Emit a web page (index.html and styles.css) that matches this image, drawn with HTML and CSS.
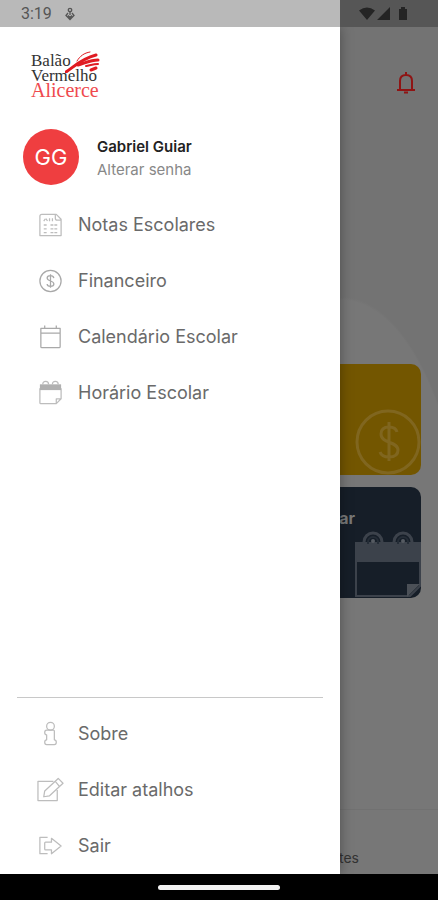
FILE: index.html
```html
<!DOCTYPE html>
<html lang="pt-BR">
<head>
<meta charset="utf-8">
<meta name="viewport" content="width=device-width, initial-scale=1">
<title>Balão Vermelho Alicerce</title>
<link rel="stylesheet" href="styles.css">
</head>
<body>
<header class="status">
  <div class="status-left">
    <span>3:19</span>
    <svg width="10" height="14" viewBox="0 0 10 14" fill="none" stroke="#555" stroke-width="1.3"><circle cx="5" cy="3" r="1.7"/><path d="M5 5v3M3 6 1 8.500 5 12.500 9 8.500 7 6M3 8.500 5 10.500 7 8.500"/></svg>
  </div>
  <svg class="status-icons" width="50" height="14" viewBox="0 0 50 14" fill="#242424"><path d="M0 3.500Q8-2.500 16 3.500L8 13zM31 0v13H18zM40 2h2V0h4v2h2v11h-8z"/></svg>
</header>

<div class="stage">
  <main class="app">
    <div class="app-top">
      <button class="bell" aria-label="Notificações">
        <svg width="20" height="24" viewBox="0 0 20 24" fill="none" stroke="#8f1414" stroke-width="2"><path d="M1 19h18M4 18v-8c0-4 2.500-6 6-6s6 2 6 6v8M10 4V1"/><path d="M8 21.500h4"/></svg>
      </button>
    </div>
    <div class="cards">
      <a class="card finance" href="#financeiro" aria-label="Financeiro">
        <svg width="66" height="66" viewBox="0 0 66 66" fill="none" stroke="#80661f" stroke-width="3"><circle cx="33" cy="33" r="31"/><path d="M34 13v39M42 23c-1-4-4-5-8-5-5 0-8 2-8 7 0 10 17 7 17 16 0 5-4 7-9 7-5 0-8-2-9-5"/></svg>
      </a>
      <a class="card schedule" href="#horario">
        <span class="card-title">ar</span>
        <svg width="67" height="67" viewBox="0 0 67 67" fill="none"><path d="M2 17v48h54l10-10V17" stroke="#3c424b" stroke-width="2"/><path d="M1 11h66v20H1z" fill="#3c424b"/><path d="M53 66V53h13z" fill="#4b5057"/><g stroke="#3c424b" stroke-width="3"><path d="M10 11a9 9 0 0 1 18 0M40 11a9 9 0 0 1 18 0"/></g><g stroke="#252d37" stroke-width="2"><path d="M14 13v-2a5 5 0 0 1 10 0v2M44 13v-2a5 5 0 0 1 10 0v2"/></g><g fill="#565b62"><circle cx="19" cy="10" r="2"/><circle cx="49" cy="10" r="2"/></g></svg>
      </a>
    </div>
    <footer class="tabs"><span>tes</span></footer>
  </main>

  <aside class="drawer">
    <div class="logo">
      <span>Balão</span>
      <span>Vermelho</span>
      <span class="logo-red">Alicerce</span>
      <svg class="balloon" width="36" height="22" viewBox="0 0 36 22" fill="none" stroke="#e01b22" stroke-linecap="round"><path d="M1 21C10 15 16 8 31 4" stroke-width="3"/><path d="M12 10C15 5 19 2 25 1" stroke-width="1"/><path d="M13 14C20 12 26 9 33 9" stroke-width="3"/><path d="M21 15C26 14 29 13 33 13" stroke-width="2"/><path d="M26 19 31 17" stroke-width="3"/></svg>
    </div>

    <div class="profile">
      <div class="avatar">GG</div>
      <div class="profile-text">
        <strong>Gabriel Guiar</strong>
        <a href="#senha">Alterar senha</a>
      </div>
    </div>

    <nav class="menu" aria-label="Menu">
      <a href="#notas"><svg class="icon" viewBox="0 0 28 28"><path d="M5 3h15l5 5v17H3V5q0-2 2-2zM19 3v4q0 2 2 2h4"/><path d="M7 10l2-3 2 3M13 7v3M16 7v3M7 14h4M7 18h4M7 22h4M14 14h7M14 18h7M14 22h7" stroke-dasharray="3 1"/></svg>Notas Escolares</a>
      <a href="#financas"><svg class="icon dark" viewBox="0 0 28 28"><circle cx="14" cy="14" r="11"/><path d="M14 7v14M17.500 11c-.5-2-2-2.500-3.500-2.500-2 0-3.500 1-3.500 2.500 0 4 7 2 7 6 0 2-1.500 2.500-3.500 2.500s-3.500-1-3.500-2.500"/></svg>Financeiro</a>
      <a href="#calendario"><svg class="icon dark" viewBox="0 0 28 28"><path d="M4 5h20v19q0 1-1 1H5q-1 0-1-1zM4 10h20M8 5V2M20 5V2"/></svg>Calendário Escolar</a>
      <a href="#horarios"><svg class="icon" viewBox="0 0 28 28"><path d="M3 9v15q0 1 1 1h16l5-5V9M20 25v-5h5M6 5q0-3 3-3t3 3M16 5q0-3 3-3t3 3"/><path class="solid" d="M3 5h22v6H3z"/></svg>Horário Escolar</a>
    </nav>

    <nav class="menu secondary" aria-label="Opções">
      <a href="#sobre"><svg class="icon" viewBox="0 0 28 28"><circle cx="14" cy="6" r="4"/><path d="M10 10h7q1 0 1 1v9q2 0 2 2.500T18 25h-8q-2 0-2-2.500T10 20v-5q-2 0-2-2.500T10 10z"/></svg>Sobre</a>
      <a href="#atalhos"><svg class="icon" viewBox="0 0 28 28"><path d="M17 5H1v20h20V14M7 21l1-6L22 2l5 5-14 13zM19 5l4 5"/></svg>Editar atalhos</a>
      <a href="#sair"><svg class="icon" viewBox="0 0 28 28"><path d="M11 5H3v17h8M15 10V6l10 8-10 8v-4H9q-1 0-1-1v-6q0-1 1-1z"/></svg>Sair</a>
    </nav>
  </aside>
</div>

<div class="system-bar"><span></span></div>
</body>
</html>
```
FILE: styles.css
```css
* {
  box-sizing: border-box;
}

:root {
  --drawer-width: min(78%, 340px);
}

body {
  margin: 0;
  min-height: 100vh;
  display: flex;
  flex-direction: column;
  font-family: Inter, "Liberation Sans", sans-serif;
  color: #6a6a6a;
}

a {
  color: inherit;
  text-decoration: none;
}

svg {
  display: block;
  flex: none;
}

.status {
  height: 27px;
  display: flex;
  align-items: center;
  justify-content: space-between;
  padding: 1px 29px 0 0;
  background: linear-gradient(to right, #b9b9b9 var(--drawer-width), #565656 var(--drawer-width));
  font: 16px/20px Roboto, sans-serif;
  color: #555;
}

.status-left {
  display: flex;
  align-items: center;
  gap: 13px;
  padding-left: 21px;
}

.stage {
  position: relative;
  flex: 1;
  display: flex;
}

.app {
  flex: 1;
  display: flex;
  flex-direction: column;
  background: radial-gradient(ellipse 130px 320px at 78% 590px, #777 99%, transparent) no-repeat, linear-gradient(#737373 50%, #777 50%);
}

.app-top {
  display: flex;
  justify-content: flex-end;
  padding: 44px 22px 0 0;
}

.bell {
  padding: 0;
  border: 0;
  background: none;
}

.cards {
  display: grid;
  gap: 12px;
  margin-top: 269px;
  padding: 0 17px;
}

.card {
  height: 111px;
  display: flex;
  flex-direction: column;
  justify-content: flex-end;
  align-items: flex-end;
  border-radius: 10px;
  overflow: hidden;
}

.finance {
  background: #735600;
}

.schedule {
  background: #161e28;
}

.card-title {
  padding-right: 66px;
  font-size: 16px;
  line-height: 20px;
  font-weight: 700;
  color: #777;
}

.card-title + svg {
  margin-top: 3px;
}

.tabs {
  margin-top: auto;
  height: 65px;
  padding: 39px 79px 0 0;
  border-top: 1px solid #717171;
  text-align: right;
  font-size: 14px;
  line-height: 18px;
  color: #333;
}

.drawer {
  position: absolute;
  top: 0;
  bottom: 0;
  left: 0;
  width: var(--drawer-width);
  display: flex;
  flex-direction: column;
  background: #fff;
  box-shadow: 0 0 12px rgba(0, 0, 0, 0.35);
  clip-path: inset(0 -24px 0 0);
}

.logo {
  position: relative;
  align-self: flex-start;
  display: flex;
  flex-direction: column;
  margin: 26px 0 0 31px;
  font: 17px/15px "Liberation Serif", serif;
  color: #333;
}

.logo-red {
  font-size: 20px;
  color: #ef4a4e;
}

.balloon {
  position: absolute;
  top: -2px;
  right: -2px;
}

.profile {
  display: flex;
  align-items: center;
  gap: 18px;
  margin: 31px 0 0 23px;
}

.avatar {
  width: 56px;
  height: 56px;
  display: grid;
  place-items: center;
  border-radius: 50%;
  background: #ef3e40;
  color: #fff;
  font-size: 22px;
}

.profile-text {
  display: flex;
  flex-direction: column;
  padding-top: 2px;
  font-size: 15px;
  line-height: 23px;
}

.profile-text strong {
  font-weight: 600;
  color: #222;
}

.profile-text a {
  color: #888;
}

.menu {
  display: flex;
  flex-direction: column;
  padding-left: 37px;
  margin-top: 12px;
}

.menu a {
  height: 56px;
  display: flex;
  align-items: center;
  gap: 14px;
  font-size: 18px;
  line-height: 24px;
}

.secondary {
  margin: auto 17px 0;
  padding-left: 20px;
  padding-top: 8px;
  border-top: 1px solid #c8c8c8;
}

.icon {
  width: 27px;
  height: 28px;
  fill: none;
  stroke: #bdbdbd;
  stroke-width: 1.3;
  stroke-linejoin: round;
}

.icon.dark {
  stroke: #a9a9a9;
}

.icon .solid {
  fill: #b0b0b0;
  stroke: none;
}

.system-bar {
  height: 26px;
  display: grid;
  place-items: center;
  background: #000;
}

.system-bar span {
  width: 28%;
  height: 5px;
  border-radius: 3px;
  background: #f2f2f2;
}
```
